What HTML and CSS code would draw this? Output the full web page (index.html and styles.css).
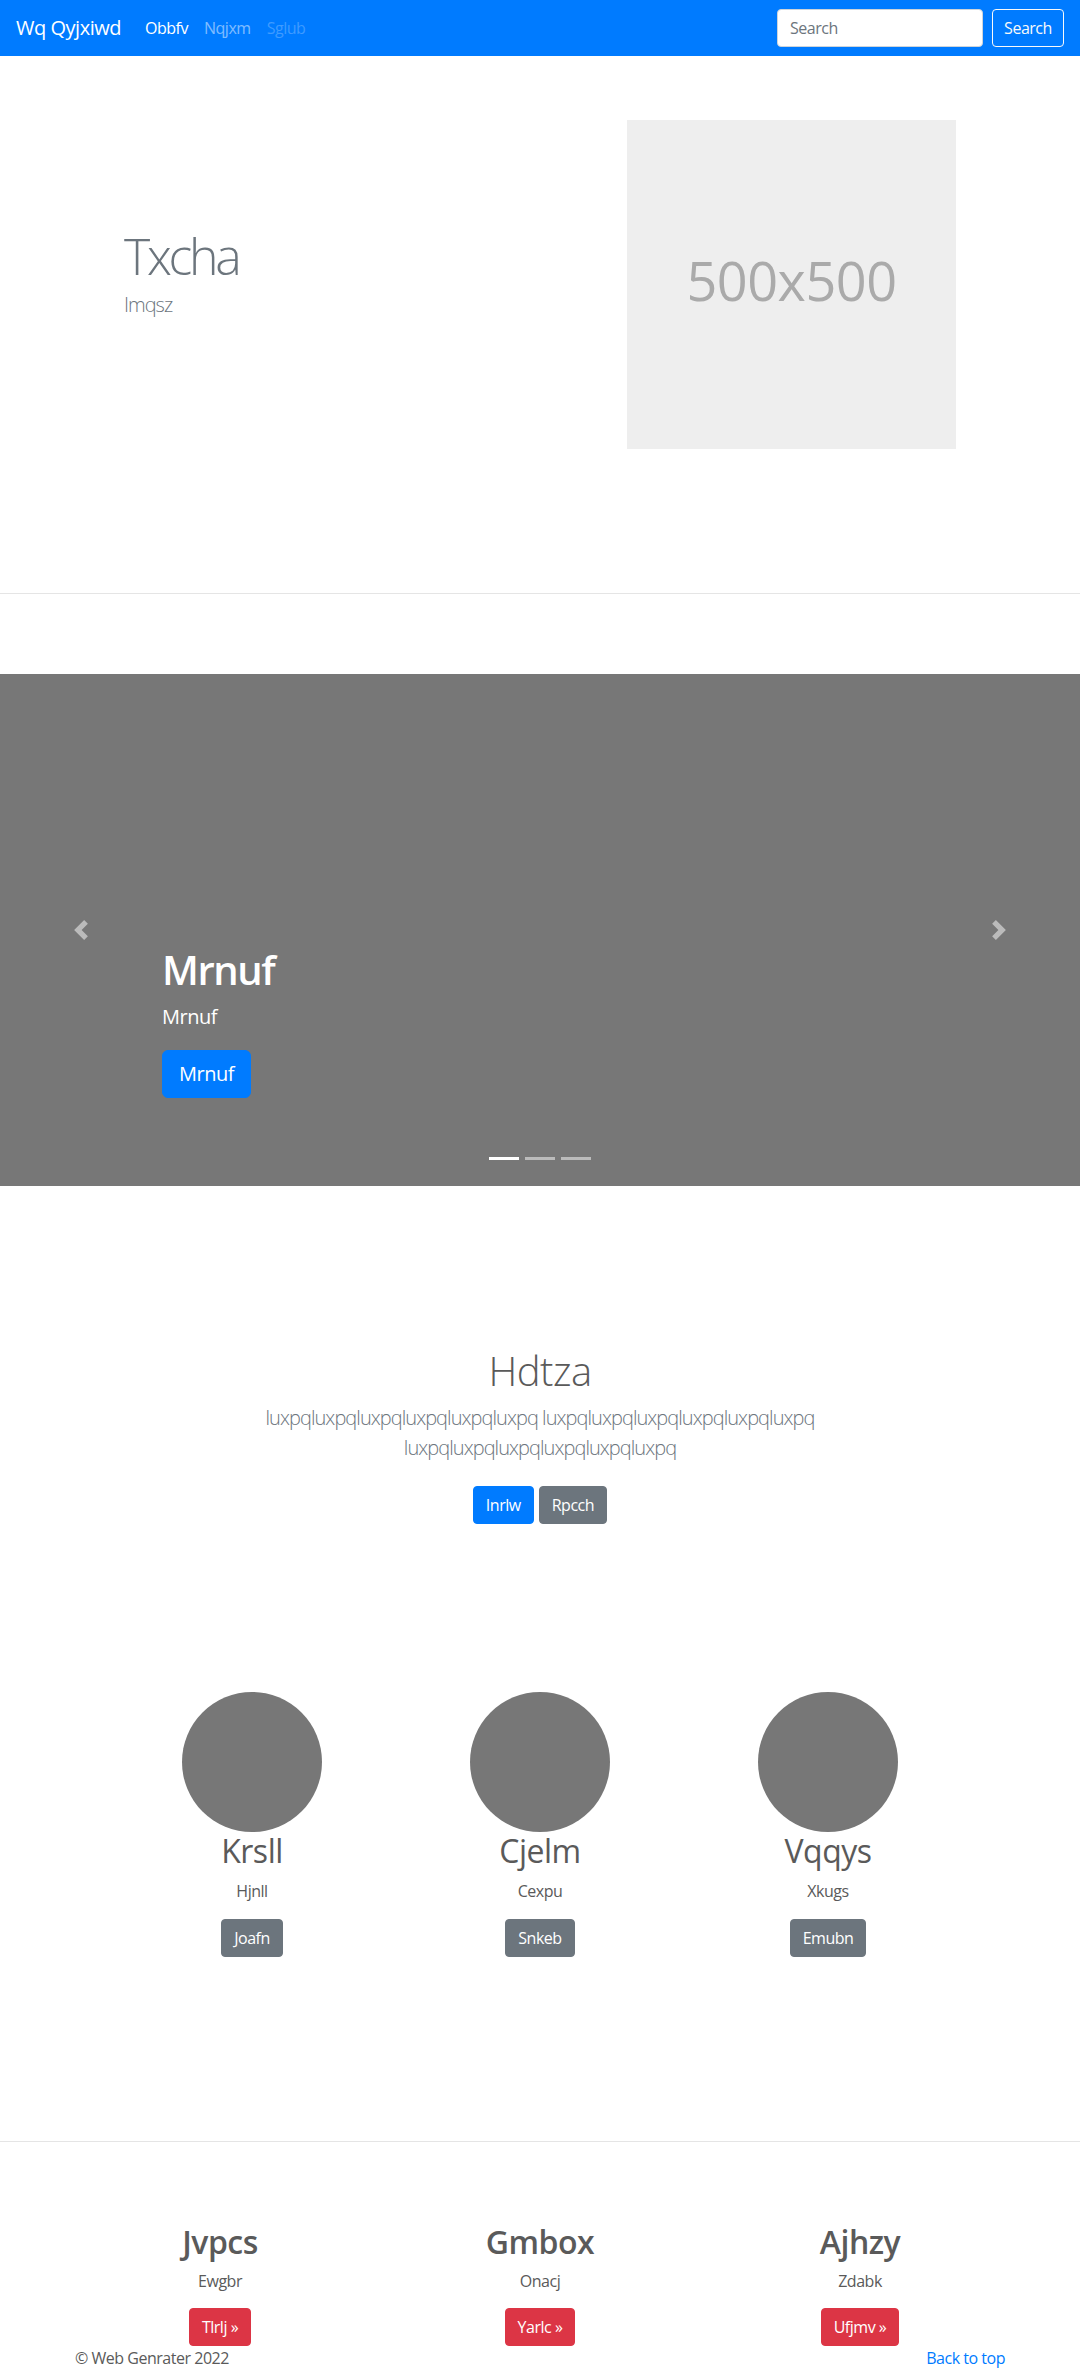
FILE: index.html
```html
<!DOCTYPE html>
<html lang="en">
<head>
<meta charset="utf-8">
<title>Wq Qyjxiwd</title>
<link rel="stylesheet" href="styles.css">
</head>
<body>
<nav class="navbar">
  <a class="brand" href="#">Wq Qyjxiwd</a>
  <ul class="nav-links">
    <li><a class="nav-link active" href="#">Obbfv</a></li>
    <li><a class="nav-link" href="#">Nqjxm</a></li>
    <li><a class="nav-link disabled" href="#">Sglub</a></li>
  </ul>
  <form class="search">
    <input class="search-input" type="text" placeholder="Search">
    <button class="search-btn" type="button">Search</button>
  </form>
</nav>

<section class="hero">
  <div class="hero-row">
    <div class="hero-text">
      <h1 class="hero-title">Txcha</h1>
      <p class="hero-lead">Imqsz</p>
    </div>
    <div class="hero-media">
      <div class="placeholder">500x500</div>
    </div>
  </div>
</section>

<div class="carousel">
  <div class="caption">
    <h1 class="caption-title">Mrnuf</h1>
    <p class="caption-text">Mrnuf</p>
    <p class="caption-action"><a class="btn btn-lg btn-primary" href="#">Mrnuf</a></p>
  </div>
  <a class="control control-prev" href="#">
    <svg viewBox="0 0 8 8" width="20" height="20"><path d="M5.25 0l-4 4 4 4 1.5-1.5L4.25 4l2.5-2.5L5.25 0z" fill="#fff"/></svg>
  </a>
  <a class="control control-next" href="#">
    <svg viewBox="0 0 8 8" width="20" height="20"><path d="M2.75 0l-1.5 1.5L3.75 4l-2.5 2.5L2.75 8l4-4-4-4z" fill="#fff"/></svg>
  </a>
  <ol class="indicators">
    <li class="active"></li>
    <li></li>
    <li></li>
  </ol>
</div>

<section class="jumbo">
  <h1 class="jumbo-title">Hdtza</h1>
  <p class="jumbo-lead">luxpqluxpqluxpqluxpqluxpqluxpq luxpqluxpqluxpqluxpqluxpqluxpq luxpqluxpqluxpqluxpqluxpqluxpq</p>
  <p class="jumbo-actions"><a class="btn btn-primary" href="#">Inrlw</a> <a class="btn btn-secondary" href="#">Rpcch</a></p>
</section>

<section class="marketing">
  <div class="feature">
    <div class="circle"></div>
    <h2 class="feature-title">Krsll</h2>
    <p class="feature-text">Hjnll</p>
    <p class="feature-action"><a class="btn btn-secondary" href="#">Joafn</a></p>
  </div>
  <div class="feature">
    <div class="circle"></div>
    <h2 class="feature-title">Cjelm</h2>
    <p class="feature-text">Cexpu</p>
    <p class="feature-action"><a class="btn btn-secondary" href="#">Snkeb</a></p>
  </div>
  <div class="feature">
    <div class="circle"></div>
    <h2 class="feature-title">Vqqys</h2>
    <p class="feature-text">Xkugs</p>
    <p class="feature-action"><a class="btn btn-secondary" href="#">Emubn</a></p>
  </div>
</section>

<hr class="divider">

<section class="columns">
  <div class="column">
    <h2 class="column-title">Jvpcs</h2>
    <p class="column-text">Ewgbr</p>
    <p class="column-action"><a class="btn btn-danger" href="#">Tlrlj &raquo;</a></p>
  </div>
  <div class="column">
    <h2 class="column-title">Gmbox</h2>
    <p class="column-text">Onacj</p>
    <p class="column-action"><a class="btn btn-danger" href="#">Yarlc &raquo;</a></p>
  </div>
  <div class="column">
    <h2 class="column-title">Ajhzy</h2>
    <p class="column-text">Zdabk</p>
    <p class="column-action"><a class="btn btn-danger" href="#">Ufjmv &raquo;</a></p>
  </div>
</section>

<footer class="footer">
  <p class="copy">&copy; Web Genrater 2022</p>
  <p class="back"><a href="#">Back to top</a></p>
</footer>
</body>
</html>
```

FILE: styles.css
```css
* { box-sizing: border-box; }

html, body {
  margin: 0;
  padding: 0;
}

body {
  font-family: "Open Sans", "Noto Sans", "Liberation Sans", sans-serif;
  font-size: 16px;
  line-height: 1.5;
  color: #5a5a5a;
  background: #fff;
  letter-spacing: -0.03em;
}

a { text-decoration: none; }

h1, h2, p { margin: 0; }

/* Navbar */
.navbar {
  display: flex;
  align-items: center;
  height: 56px;
  padding: 8px 16px;
  background: #007bff;
}

.brand {
  color: #fff;
  font-size: 20px;
  line-height: 30px;
  padding: 5px 0;
  margin-right: 16px;
}

.nav-links {
  display: flex;
  list-style: none;
  margin: 0;
  padding: 0;
  flex: 1;
}

.nav-link {
  display: block;
  padding: 8px;
  line-height: 24px;
  color: rgba(255, 255, 255, 0.5);
}

.nav-link.active { color: #fff; }
.nav-link.disabled { color: rgba(255, 255, 255, 0.25); }

.search {
  display: flex;
  gap: 9px;
}

.search-input {
  width: 206px;
  height: 38px;
  padding: 6px 12px;
  border: 1px solid #ced4da;
  border-radius: 4px;
  font-family: inherit;
  font-size: 16px;
  letter-spacing: -0.03em;
  color: #495057;
  background: #fff;
}

.search-input::placeholder { color: #6c757d; }

.search-btn {
  height: 38px;
  width: 72px;
  padding: 6px 10px;
  border: 1px solid #f8f9fa;
  border-radius: 4px;
  background: transparent;
  color: #f8f9fa;
  font-family: inherit;
  font-size: 16px;
  letter-spacing: -0.03em;
}

/* Hero */
.hero {
  padding: 64px 0 144px;
  border-bottom: 1px solid #e5e5e5;
}

.hero-row {
  width: 960px;
  margin: 0 auto;
  display: flex;
}

.hero-text {
  width: 480px;
  padding: 106px 0 0 64px;
}

.hero-title {
  font-size: 50px;
  line-height: 60px;
  font-weight: 300;
  color: #6c757d;
  letter-spacing: -0.065em;
  margin-bottom: 4px;
}

.hero-lead {
  font-size: 20px;
  line-height: 30px;
  font-weight: 300;
  color: #6c757d;
  letter-spacing: -0.05em;
}

.hero-media {
  width: 480px;
  padding-left: 87px;
}

.placeholder {
  width: 329px;
  height: 329px;
  background: #eee;
  color: #aaa;
  font-size: 54px;
  line-height: 1;
  display: flex;
  align-items: center;
  justify-content: center;
  padding-bottom: 9px;
}

/* Carousel */
.carousel {
  position: relative;
  margin-top: 80px;
  height: 512px;
  background: #777;
  display: flex;
  flex-direction: column;
  justify-content: flex-end;
  padding: 0 15% 88px;
}

.caption { color: #fff; }

.caption-title {
  font-size: 40px;
  line-height: 48px;
  font-weight: 600;
  margin-bottom: 8px;
  letter-spacing: -0.035em;
}

.caption-text {
  font-size: 20px;
  line-height: 30px;
  margin-bottom: 18px;
}

.caption-action { line-height: 0; }

.control {
  position: absolute;
  top: 0;
  bottom: 0;
  width: 15%;
  display: flex;
  align-items: center;
  justify-content: center;
  opacity: 0.5;
}

.control svg { display: block; }

.control-prev { left: 0; }
.control-next { right: 0; }

.indicators {
  position: absolute;
  left: 0;
  right: 0;
  bottom: 26px;
  margin: 0;
  padding: 0;
  list-style: none;
  display: flex;
  justify-content: center;
  gap: 6px;
}

.indicators li {
  width: 30px;
  height: 3px;
  background: #fff;
  opacity: 0.5;
}

.indicators li.active { opacity: 1; }

/* Buttons */
.btn {
  display: inline-block;
  padding: 6px 12px;
  font-size: 16px;
  line-height: 24px;
  border: 1px solid transparent;
  border-radius: 4px;
  color: #fff;
  vertical-align: middle;
}

.btn-lg {
  padding: 8px 16px;
  font-size: 20px;
  line-height: 30px;
  border-radius: 6px;
}

.btn-primary { background: #007bff; border-color: #007bff; }
.btn-secondary { background: #6c757d; border-color: #6c757d; }
.btn-danger { background: #dc3545; border-color: #dc3545; }

/* Jumbotron */
.jumbo {
  padding-top: 161px;
  text-align: center;
}

.jumbo-title {
  font-size: 40px;
  line-height: 48px;
  font-weight: 300;
  color: #5a5a5a;
  margin-bottom: 8px;
}

.jumbo-lead {
  max-width: 610px;
  margin: 0 auto;
  font-size: 20px;
  line-height: 30px;
  font-weight: 300;
  color: #6c757d;
  letter-spacing: -0.047em;
}

.jumbo-actions {
  margin-top: 23px;
  line-height: 0;
  font-size: 0;
  display: flex;
  justify-content: center;
  gap: 5px;
}

/* Marketing */
.marketing {
  width: 864px;
  margin: 168px auto 0;
  display: grid;
  grid-template-columns: repeat(3, 1fr);
  text-align: center;
}

.circle {
  width: 140px;
  height: 140px;
  border-radius: 50%;
  background: #777;
  margin: 0 auto;
}

.feature-title {
  font-size: 32px;
  line-height: 38px;
  font-weight: 400;
  margin-bottom: 9px;
}

.feature-text { margin-bottom: 16px; }

.feature-action { line-height: 0; }

.divider {
  margin: 184px 0 0;
  border: 0;
  border-top: 1px solid #e5e5e5;
}

/* Columns */
.columns {
  width: 960px;
  margin: 81px auto 0;
  display: grid;
  grid-template-columns: repeat(3, 1fr);
  text-align: center;
}

.column-title {
  font-size: 32px;
  line-height: 38px;
  font-weight: 600;
  margin-bottom: 8px;
}

.column-text { margin-bottom: 15px; }

.column-action { line-height: 0; }

/* Footer */
.footer {
  width: 960px;
  margin: 0 auto;
  padding: 0 15px 40px;
  display: flex;
  justify-content: space-between;
}

.back a { color: #007bff; }
```
